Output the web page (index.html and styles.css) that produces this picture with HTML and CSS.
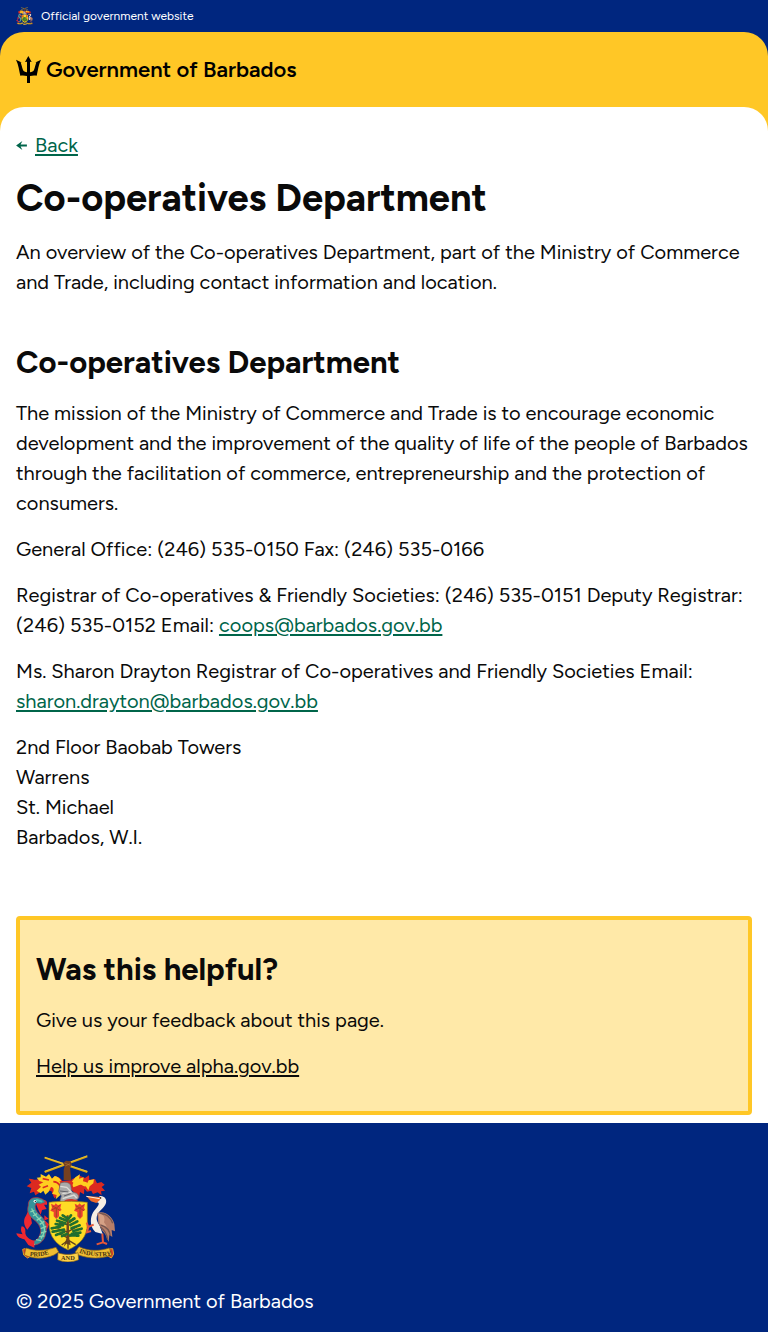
FILE: index.html
```html
<!DOCTYPE html>
<html lang="en">
<head>
<meta charset="utf-8">
<meta name="viewport" content="width=device-width, initial-scale=1">
<title>Co-operatives Department</title>
<link rel="stylesheet" href="styles.css">
</head>
<body>
<div class="official">
  <svg class="official-crest" viewBox="6 9 300 321" aria-hidden="true"><use href="#crest"/></svg>
  <span>Official government website</span>
</div>
<div class="band">
  <header class="site-header">
    <a class="brand" href="#">
      <svg class="trident" viewBox="0 0 75 81" aria-hidden="true">
        <path d="M37 0 47 18 42 17 42 49C48 48 52 46 54 42C57 34 59 25 61 19L56 20C63 17 69 14 75 11C67 27 66 43 62 59C56 58 49 58 42 60V81H33V60C26 58 19 58 13 59C9 43 8 27 0 11C6 14 12 17 19 20L14 19C16 25 18 34 21 42C23 46 27 48 33 49V17L27 18Z"/>
      </svg>
      <span>Government of Barbados</span>
    </a>
  </header>
  <main class="page">
    <div class="back-row">
      <svg class="arrow" viewBox="0 0 12 10" aria-hidden="true"><path d="M0 5 7 0 5 4H12V6H5L7 10Z"/></svg>
      <a class="link" href="#">Back</a>
    </div>
    <h1 class="title">Co-operatives Department</h1>
    <p class="text">An overview of the Co-operatives Department, part of the Ministry of Commerce and Trade, including contact information and location.</p>
    <section class="details">
      <h2 class="heading">Co-operatives Department</h2>
      <p class="text">The mission of the Ministry of Commerce and Trade is to encourage economic development and the improvement of the quality of life of the people of Barbados through the facilitation of commerce, entrepreneurship and the protection of consumers.</p>
      <p class="text">General Office: (246) 535-0150 Fax: (246) 535-0166</p>
      <p class="text">Registrar of Co-operatives &amp; Friendly Societies: (246) 535-0151 Deputy Registrar: (246) 535-0152 Email: <a class="link" href="mailto:coops@barbados.gov.bb">coops@barbados.gov.bb</a></p>
      <p class="text">Ms. Sharon Drayton Registrar of Co-operatives and Friendly Societies Email: <a class="link" href="mailto:sharon.drayton@barbados.gov.bb">sharon.drayton@barbados.gov.bb</a></p>
      <p class="text">2nd Floor Baobab Towers<br>Warrens<br>St. Michael<br>Barbados, W.I.</p>
    </section>
    <aside class="feedback">
      <h2 class="heading">Was this helpful?</h2>
      <p class="text">Give us your feedback about this page.</p>
      <p class="text"><a class="plain-link" href="#">Help us improve alpha.gov.bb</a></p>
    </aside>
  </main>
</div>
<footer class="footer">
  <svg class="footer-crest" viewBox="6 9 300 321" role="img" aria-label="Coat of arms of Barbados">
    <g id="crest">
      <!-- crossed canes, fist and arm -->
      <path d="M92 17 220 60M92 60 220 13" stroke="#d9a514" stroke-width="6"/>
      <path d="M92 16 220 58M92 58 220 11" stroke="#f5d23c" stroke-width="2"/>
      <path d="M149 84V54L152 43 147 33 156 26 170 28 173 38 168 47 172 84Z" fill="#75401f"/>
      <path d="M152 33 169 40M154 42 168 35" stroke="#b17537" stroke-width="2"/>
      <!-- mantling -->
      <path d="M147 90C137 72 122 70 112 82L92 76 98 90 74 82C58 86 57 79 44 80L52 92 38 103 52 108 47 124 60 119 64 130 75 123 80 112 91 110 100 116 112 117 121 139 134 130 148 109Z" fill="#dc2a20"/>
      <path d="M144 102C144 83 134 74 122 72L114 80 105 66 96 74 80 66 80 76 68 77 76 87 88 91 74 98 81 104 68 116 80 124 88 116 94 128 104 119 111 105C121 105 121 119 114 125L128 129 125 142 140 128 150 107Z" fill="#ffcf20"/>
      <path d="M118 89C134 90 142 101 139 119M86 80 105 84M86 107 102 101" fill="none" stroke="#dc2a20" stroke-width="5"/>
      <path d="M169 90C177 72 188 79 196 87L193 70 213 78 225 70 226 84 243 81 249 94 262 90 272 98 263 105 273 116 261 118 263 130 251 121 237 126 232 116 219 119 211 110 210 127 198 120 195 139 185 127 170 111Z" fill="#dc2a20"/>
      <path d="M172 91 184 76 198 67 195 80 209 76 207 88 218 91C224 103 213 107 203 99C197 96 190 103 178 106ZM224 85 240 82 238 94 227 103 223 115 215 102Z" fill="#ffcf20"/>
      <!-- helmet -->
      <path d="M136 88 170 85 178 92 173 104 145 101Z" fill="#dc2a20"/>
      <path d="M139 94C150 88 164 90 170 99L173 119 188 124C198 132 195 143 184 145L149 153 138 146 142 132 134 119Z" fill="#aaa9a9" stroke="#66666b" stroke-width="2"/>
      <path d="M139 103 158 106 172 120 145 125M146 140 180 129 188 138" fill="none" stroke="#deddd8" stroke-width="4"/>
      <path d="M138 117 163 120M150 132 170 125" stroke="#606168" stroke-width="3"/>
      <path d="M148 150C154 138 174 139 193 145L177 152Z" fill="#cf3329"/>
      <!-- dolphin -->
      <path d="M82 145C96 141 101 149 99 158L90 158 98 171 84 174 80 188 72 171 66 156ZM44 173 36 191C27 202 29 220 40 233L54 214 49 188ZM91 190 104 200 92 205 105 217 98 235 91 216Z" fill="#ee2830"/>
      <path d="M43 160C42 142 56 133 76 138C85 140 90 144 95 151L80 156 67 154C58 167 69 182 82 193C98 208 101 232 93 254C85 274 63 286 43 275L39 264C54 271 70 268 77 250C86 230 73 213 58 202C43 190 38 178 43 160Z" fill="#35949b" stroke="#c52e35" stroke-width="2"/>
      <path d="M53 169C58 187 72 197 84 210C96 226 92 244 81 260M49 180 61 175M57 192 69 185M68 205 82 196M77 217 91 208M80 230 97 223M81 243 97 238M75 254 91 252M66 263 81 266M52 269 62 278" fill="none" stroke="#89d2b1" stroke-width="4"/>
      <path d="M60 150 69 144 85 149" fill="none" stroke="#4dc8b6" stroke-width="6"/>
      <circle cx="63" cy="148" r="4" fill="#fff"/><circle cx="64" cy="148" r="2"/>
      <path d="M61 267C45 262 36 255 34 244C36 231 31 224 23 223C19 234 22 240 26 247L7 244C10 256 20 260 31 262L43 279 61 287Z" fill="#ee2830"/>
      <!-- shield -->
      <path d="M105 151C136 147 176 147 220 151V216C220 253 199 277 162 294C126 278 105 253 105 216Z" fill="#ffdc25" stroke="#8f7116" stroke-width="2"/>
      <g id="flower">
        <path d="M111 155 121 160 125 154 132 160 142 155 139 168 143 174 135 178 135 193 127 201 119 193 119 180 109 176 114 167Z" fill="#ec4230"/>
        <path d="M115 162 127 168 138 160M114 173 126 168 139 176M127 168V196" fill="none" stroke="#9f4a1e" stroke-width="3"/>
      </g>
      <use href="#flower" x="71"/>
      <path d="M158 190H164L166 260 170 280 157 275 149 285 157 260Z" fill="#70481e"/>
      <path d="M159 267 143 279M162 268V290M165 266 185 278M160 240 130 230M164 238 194 221M160 218 135 213M164 213 184 200M160 257 137 246M165 253 193 243" fill="none" stroke="#60421e" stroke-width="4"/>
      <path d="M113 229 140 224M116 239 150 233M125 216 147 220M129 206 154 214M138 198 157 206M146 190 160 199M171 190 163 201M181 199 165 210M190 208 169 219M197 220 171 229M203 230 175 238M199 242 170 246M193 251 168 250M126 249 151 240M144 252 159 246" stroke="#216f2e" stroke-width="8" stroke-linecap="round" stroke-dasharray="6 4"/>
      <!-- pelican -->
      <path d="M257 132C271 130 279 142 276 153C270 170 256 175 250 188C244 203 252 212 257 221L266 246 244 240C229 225 228 203 234 188C240 173 257 161 254 153L248 150Z" fill="#f5eee5"/>
      <path d="M217 132C230 133 246 133 261 136L257 145 247 153 231 148Z" fill="#ee6929"/>
      <path d="M217 133 257 140" stroke="#fff3dc" stroke-width="3"/>
      <circle cx="260" cy="138" r="2"/>
      <path d="M250 183C274 174 296 196 301 216L303 238 293 234 295 255 286 248 284 270 274 247 264 235 253 213Z" fill="#b77e68"/>
      <path d="M256 186C275 182 290 197 296 214M260 219C280 225 287 235 289 252M259 225C273 235 279 246 281 264" fill="none" stroke="#755751" stroke-width="4"/>
      <path d="M254 185C268 186 275 196 270 211L279 224 258 215Z" fill="#d5a186"/>
      <path d="M239 218 223 225 218 212M223 225 219 241 231 237M265 245 267 271 248 277M267 271 279 276" fill="none" stroke="#e55739" stroke-width="6"/>
      <!-- motto ribbon -->
      <path d="M33 290 26 292 29 309 41 318 54 309ZM283 291 296 290 299 306 292 318 277 309Z" fill="#cf382b" stroke="#e5a323" stroke-width="3"/>
      <path d="M36 288C65 298 92 297 126 286L134 300 120 309C88 322 58 321 31 309ZM195 284C225 298 254 298 286 288L293 309C263 321 227 321 194 309L183 301Z" fill="#efbd32" stroke="#8b6414" stroke-width="2"/>
      <path d="M132 302C151 309 172 309 192 302L194 323C172 332 151 332 131 323Z" fill="#ffd147" stroke="#8b6414" stroke-width="2"/>
      <path id="pride" d="M47 312Q84 317 119 301" fill="none"/>
      <path id="industry" d="M195 302Q235 317 292 311" fill="none"/>
      <g class="motto"><text><textPath href="#pride">PRIDE</textPath></text><text x="141" y="324">AND</text><text><textPath href="#industry">INDUSTRY</textPath></text></g>
    </g>
  </svg>
  <p class="text">© 2025 Government of Barbados</p>
</footer>
</body>
</html>
```
FILE: styles.css
```css
* { box-sizing: border-box; }
body { margin: 0; background: #fff; color: #0a0a0a; font-family: Figtree, Lato, sans-serif; font-size: 20px; line-height: 30px; -webkit-font-smoothing: antialiased; }
h1, h2, p { margin: 0; }
.official { display: flex; align-items: center; gap: 8px; height: 32px; padding: 0 16px; background: #00267f; color: #fff; font-size: 12px; line-height: 16px; }
.official-crest { width: 17px; height: 18px; }
.band { background: linear-gradient(#00267f 0 32px, #ffc726 32px 160px, #fff 160px); }
.site-header { display: flex; align-items: center; height: 75px; padding: 0 16px; border-radius: 24px 24px 0 0; background: #ffc726; }
.brand { display: flex; align-items: center; gap: 5px; color: #000; font-size: 22px; font-weight: 600; text-decoration: none; }
.trident { width: 25px; height: 27px; }
.page { padding: 23px 16px 8px; border-radius: 24px 24px 0 0; background: #fff; }
.back-row { display: flex; align-items: center; gap: 8px; }
.arrow { width: 11px; height: 9px; fill: #00654a; }
.link { color: #00654a; text-decoration-thickness: 2px; text-underline-offset: 2px; }
.plain-link { color: inherit; text-decoration-thickness: 2px; text-underline-offset: 2px; }
.title { margin: 15px 0; font-size: 38px; line-height: 47px; }
.heading { margin-bottom: 15px; font-size: 31px; line-height: 40px; }
.details { margin-top: 46px; }
.text + .text { margin-top: 16px; }
.feedback { margin-top: 64px; padding: 30px 16px; border: 4px solid #ffc726; border-radius: 4px; background: #ffe9a8; }
.footer { padding: 32px 16px 16px; background: #00267f; color: #fff; }
.footer-crest { display: block; width: 100px; height: 107px; margin-bottom: 24px; }
.motto { font: 700 19px "Liberation Serif", serif; fill: #493410; }
```
